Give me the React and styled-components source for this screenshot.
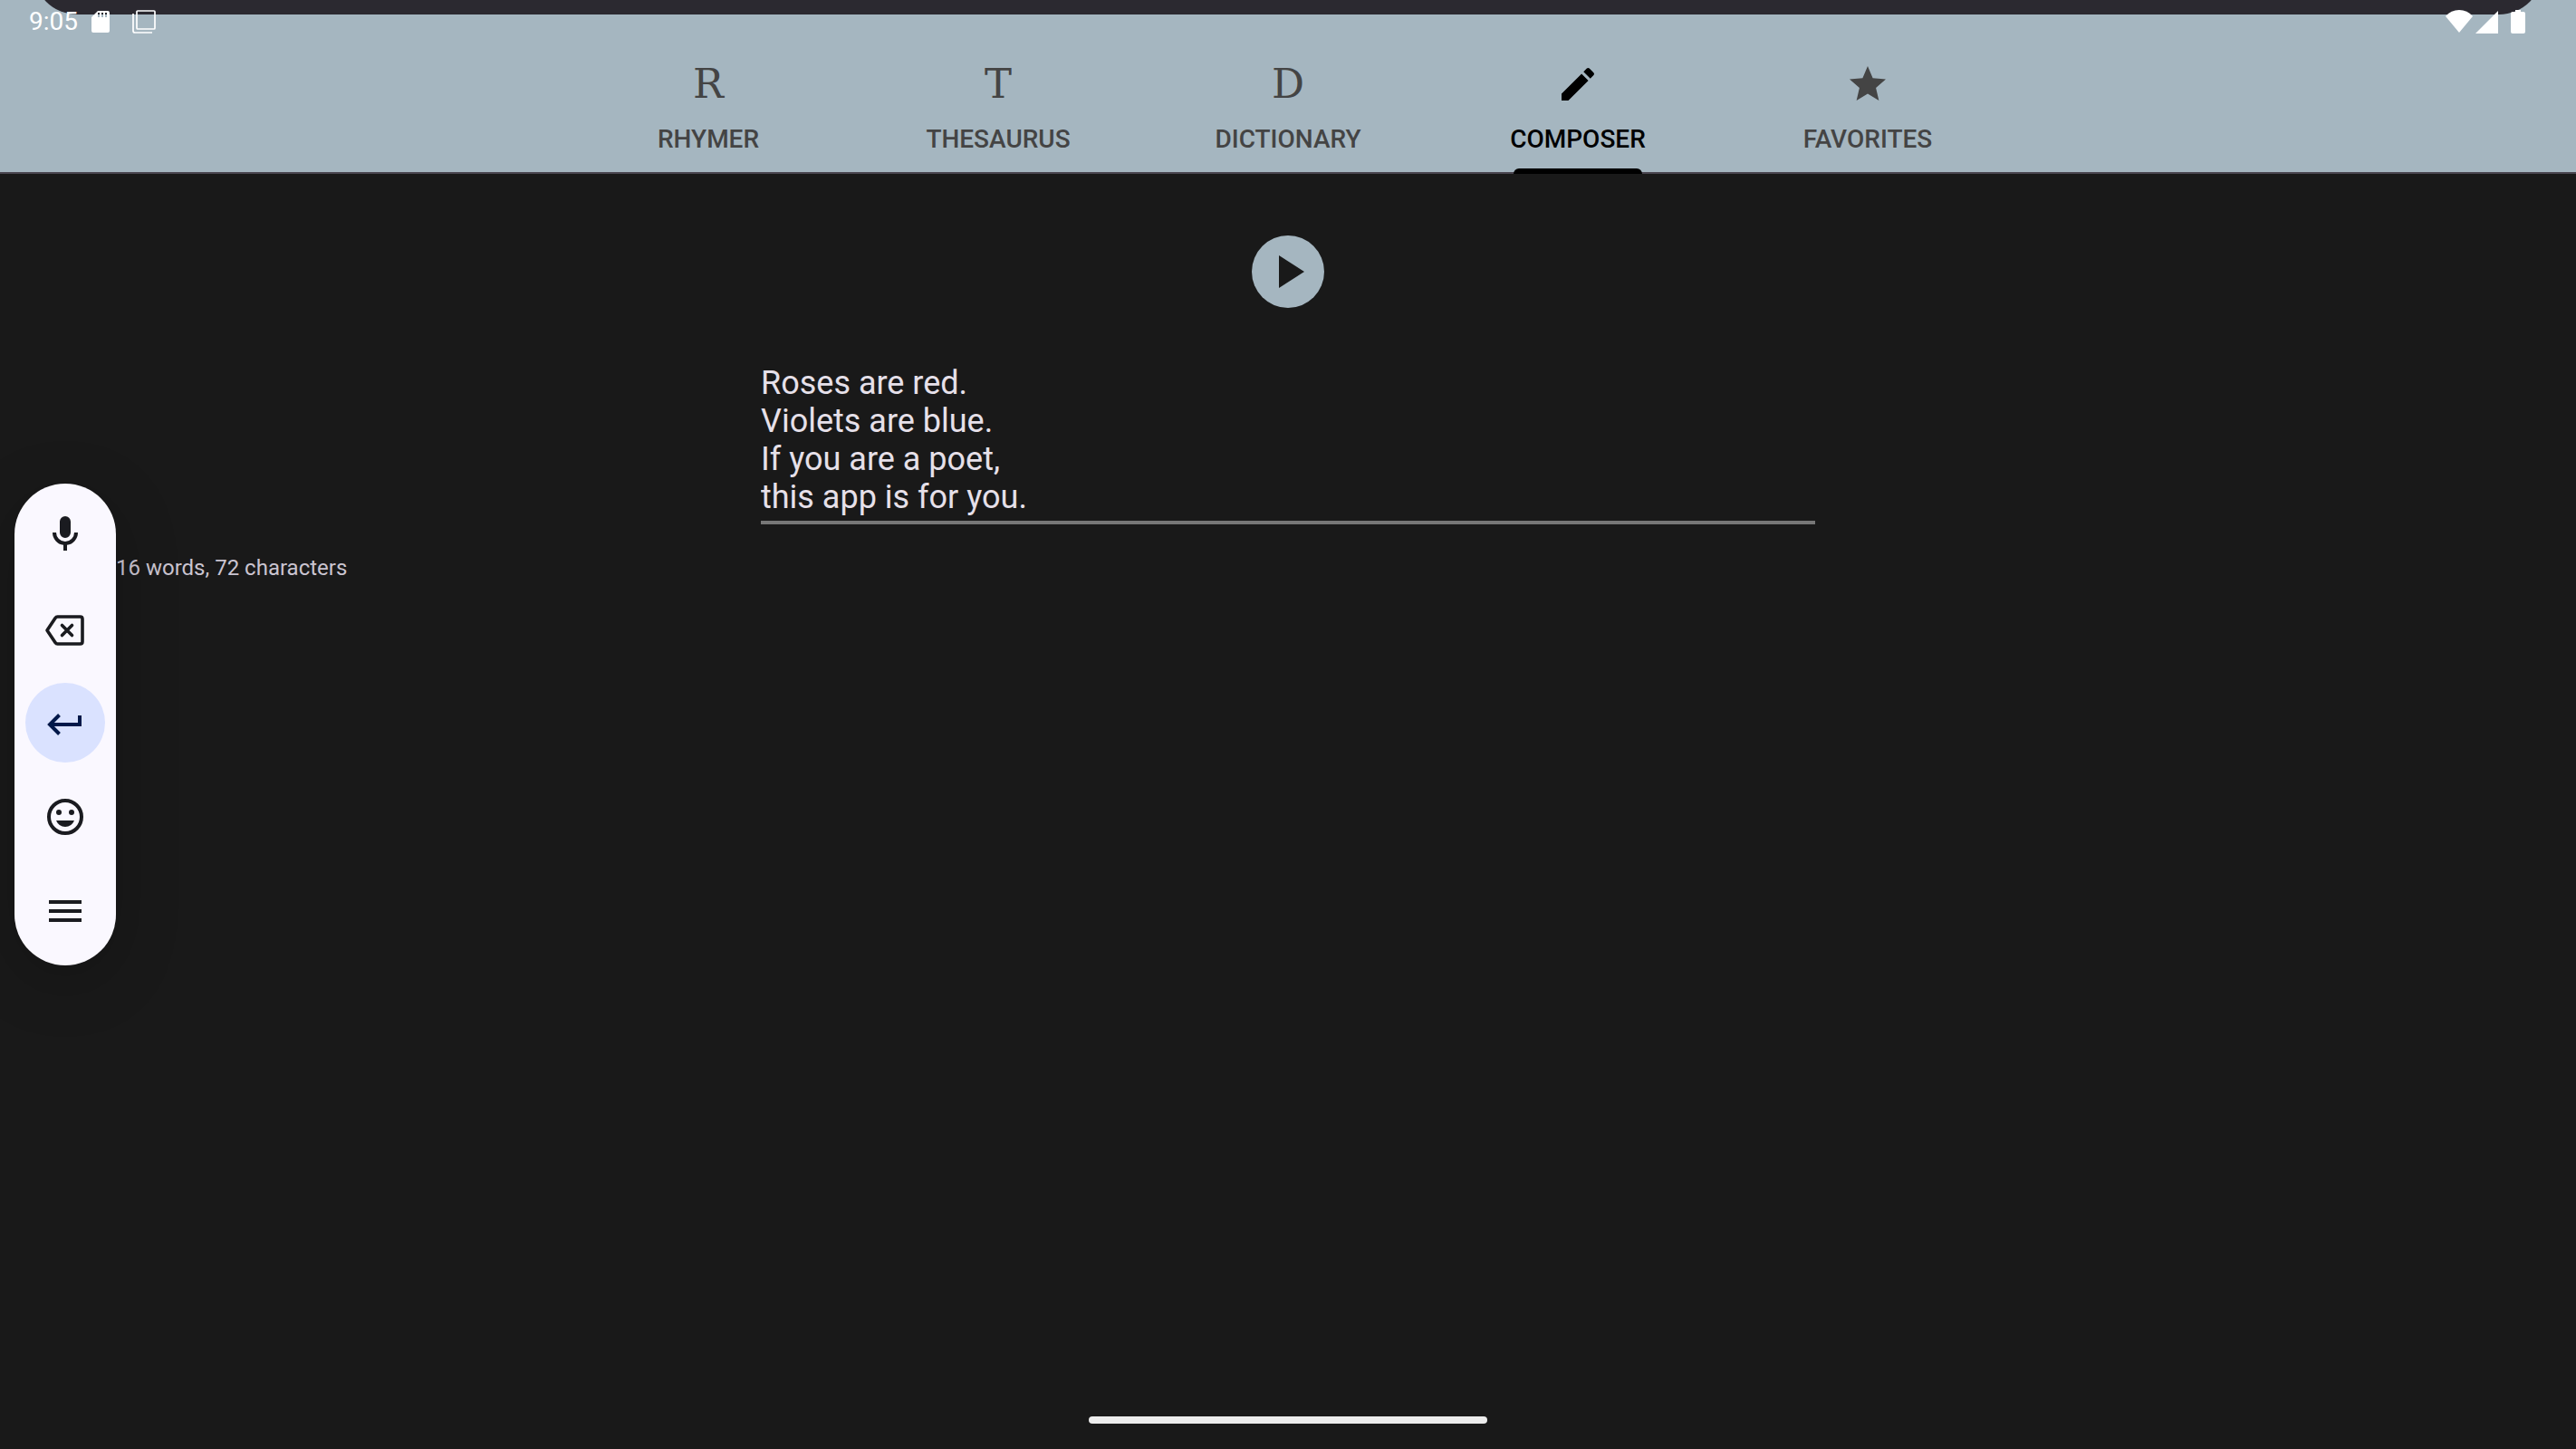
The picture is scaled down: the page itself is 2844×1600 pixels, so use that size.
import React, { useState } from "react";
import styled, { createGlobalStyle } from "styled-components";

const GlobalStyle = createGlobalStyle`
  *, *::before, *::after { box-sizing: border-box; }
  body {
    margin: 0;
    background: #191919;
    font-family: Roboto, "Noto Sans", sans-serif;
  }
  button {
    border: 0;
    padding: 0;
    background: none;
    font: inherit;
    color: inherit;
    cursor: pointer;
  }
`;

const Screen = styled.div`
  position: relative;
  display: flex;
  flex-direction: column;
  min-height: 100vh;
  background: #191919;
  overflow: hidden;
`;

const Header = styled.header`
  position: relative;
  display: flex;
  flex-direction: column;
  background: #a5b6c0;
  border-bottom: 2px solid #49454f;
`;

const Cutout = styled.div`
  position: absolute;
  top: -80px;
  left: 37px;
  right: 37px;
  height: 96px;
  border-radius: 48px;
  background: #2b2930;
`;

const StatusBar = styled.div`
  position: relative;
  display: flex;
  justify-content: space-between;
  height: 48px;
  padding: 0 56px 0 32px;
  color: #fff;
`;

const StatusGroup = styled.div`
  display: flex;
  align-items: center;
  height: 48px;
  gap: ${(p) => p.$gap}px;
`;

const Clock = styled.time`
  font-size: 28px;
  line-height: 32px;
`;

const Tabs = styled.nav`
  display: flex;
  justify-content: center;
`;

const Tab = styled.button`
  position: relative;
  display: flex;
  flex-direction: column;
  align-items: center;
  gap: 21px;
  width: 320px;
  height: 142px;
  padding-top: 21px;
  color: ${(p) => (p.$active ? "#000" : "#444")};
`;

const TabGlyph = styled.span`
  display: flex;
  align-items: center;
  justify-content: center;
  width: 48px;
  height: 48px;
  font-family: "DejaVu Serif", serif;
  font-size: 45px;
  line-height: 48px;
`;

const TabLabel = styled.span`
  font-size: 28px;
  font-weight: 500;
  line-height: 32px;
`;

const Indicator = styled.span`
  position: absolute;
  bottom: -2px;
  left: 50%;
  width: 142px;
  height: 6px;
  margin-left: -71px;
  border-radius: 6px 6px 0 0;
  background: #000;
`;

const Main = styled.main`
  display: flex;
  flex: 1;
  flex-direction: column;
  align-items: center;
  padding-top: 68px;
`;

const PlayButton = styled.button`
  display: flex;
  width: 80px;
  height: 80px;
  border-radius: 50%;
  background: #a5b6c0;
  color: #191919;
`;

const Poem = styled.textarea`
  display: block;
  width: min(1164px, 100%);
  margin: 62px 0 0;
  padding: 0 0 5px;
  border: 0;
  border-bottom: 4px solid #777;
  outline: 0;
  background: none;
  color: #e6e0e9;
  font-family: inherit;
  font-size: 36px;
  line-height: 42px;
  overflow: hidden;
  resize: none;
`;

const Count = styled.p`
  align-self: stretch;
  margin: 34px 0 0;
  padding-left: 128px;
  color: #cac4d0;
  font-size: 24px;
  line-height: 28px;
`;

const InputPill = styled.aside`
  position: absolute;
  top: 534px;
  left: 16px;
  display: flex;
  flex-direction: column;
  gap: 16px;
  padding: 12px 12px 16px;
  border-radius: 56px;
  background: #faf8ff;
  box-shadow: 0 16px 72px rgba(0, 0, 0, 0.2);
`;

const PillButton = styled.button`
  display: flex;
  align-items: center;
  justify-content: center;
  width: 88px;
  height: 88px;
  border-radius: 50%;
  background: ${(p) => (p.$primary ? "#dae2ff" : "transparent")};
  color: ${(p) => (p.$primary ? "#001849" : "#1a1b20")};
`;

const HomeBar = styled.div`
  align-self: center;
  width: 440px;
  height: 8px;
  margin-bottom: 28px;
  border-radius: 4px;
  background: #ececec;
`;

const Icon = ({ path, children, size = 48 }) => (
  <svg width={size} height={size} viewBox="0 0 24 24" fill="currentColor" aria-hidden="true">
    {path ? <path d={path} /> : children}
  </svg>
);

const PENCIL =
  "M3 17.25V21h3.75L17.81 9.94l-3.75-3.75L3 17.25zM20.71 7.04a1 1 0 0 0 0-1.41l-2.34-2.34a1 1 0 0 0-1.41 0l-1.83 1.83 3.75 3.75 1.83-1.83z";
const STAR =
  "M12 17.27 18.18 21l-1.64-7.03L22 9.24l-7.19-.61L12 2 9.19 8.63 2 9.24l5.46 4.73L5.82 21z";

const TABS = [
  { name: "Rhymer", glyph: "R" },
  { name: "Thesaurus", glyph: "T" },
  { name: "Dictionary", glyph: "D" },
  { name: "Composer", glyph: <Icon path={PENCIL} /> },
  { name: "Favorites", glyph: <Icon path={STAR} /> },
];

const POEM = "Roses are red.\nViolets are blue.\nIf you are a poet,\nthis app is for you.";

const SdCard = () => (
  <svg width="20" height="26" viewBox="0 0 20 26" aria-hidden="true">
    <path
      fill="currentColor"
      fillRule="evenodd"
      d="M7 1h11q2 0 2 2v20q0 2-2 2H2q-2 0-2-2V8zM7 3v5h2V3zm4 0v5h2V3zm4 0v5h2V3z"
    />
  </svg>
);

const Windows = () => (
  <svg width="26" height="26" viewBox="0 0 26 26" fill="none" stroke="currentColor" strokeWidth="1.7" aria-hidden="true">
    <rect x="5" y="1" width="20" height="20" rx="1" />
    <path d="M1 4v19q0 2 2 2h19" />
  </svg>
);

const Wifi = () => (
  <svg width="30" height="26" viewBox="0 0 30 26" fill="currentColor" aria-hidden="true">
    <path d="M0 7Q6 0 15 0t15 7L15 25z" />
  </svg>
);

const Signal = () => (
  <svg width="25" height="26" viewBox="0 0 25 26" fill="currentColor" aria-hidden="true">
    <path d="M25 1v25H0z" />
  </svg>
);

const Battery = () => (
  <svg width="16" height="26" viewBox="0 0 16 26" fill="currentColor" aria-hidden="true">
    <path d="M5 0h6v2h3q2 0 2 2v20q0 2-2 2H2q-2 0-2-2V4q0-2 2-2h3z" />
  </svg>
);

export default function App() {
  const [active, setActive] = useState("Composer");
  const [text, setText] = useState(POEM);
  const words = text.split(/\s+/).filter(Boolean).length;

  return (
    <Screen>
      <GlobalStyle />
      <Header>
        <Cutout />
        <StatusBar>
          <StatusGroup $gap={15}>
            <Clock>9:05</Clock>
            <StatusGroup $gap={25}>
              <SdCard />
              <Windows />
            </StatusGroup>
          </StatusGroup>
          <StatusGroup $gap={14}>
            <StatusGroup $gap={3}>
              <Wifi />
              <Signal />
            </StatusGroup>
            <Battery />
          </StatusGroup>
        </StatusBar>
        <Tabs>
          {TABS.map(({ name, glyph }) => (
            <Tab key={name} type="button" $active={name === active} onClick={() => setActive(name)}>
              <TabGlyph>{glyph}</TabGlyph>
              <TabLabel>{name.toUpperCase()}</TabLabel>
              {name === active && <Indicator />}
            </Tab>
          ))}
        </Tabs>
      </Header>

      <Main>
        <PlayButton type="button" aria-label="Play">
          <svg width="80" height="80" viewBox="0 0 80 80" fill="currentColor" aria-hidden="true">
            <path d="M30 22v36l28-18z" />
          </svg>
        </PlayButton>
        <Poem
          aria-label="Poem"
          rows={4}
          spellCheck={false}
          value={text}
          onChange={(e) => setText(e.target.value)}
        />
        <Count>
          {words} words, {text.length} characters
        </Count>
      </Main>

      <InputPill>
        <PillButton type="button" aria-label="Voice input">
          <Icon path="M12 14a3 3 0 0 0 3-3V5a3 3 0 0 0-6 0v6a3 3 0 0 0 3 3zm5-3a5 5 0 0 1-10 0H5a7 7 0 0 0 6 6.92V21h2v-3.08A7 7 0 0 0 19 11z" />
        </PillButton>
        <PillButton type="button" aria-label="Backspace">
          <svg width="48" height="48" viewBox="0 0 48 48" fill="none" stroke="currentColor" strokeWidth="3.6" aria-hidden="true">
            <path strokeLinejoin="round" d="M15.5 11h25q2.5 0 2.5 2.5v25q0 2.5-2.5 2.5h-25q-1.5 0-2.5-1.5L4 26l9-13.5q1-1.5 2.5-1.5z" />
            <path strokeLinecap="round" d="m20.5 20.5 11 11m0-11-11 11" />
          </svg>
        </PillButton>
        <PillButton type="button" aria-label="Enter" $primary>
          <svg width="48" height="48" viewBox="0 0 48 48" fill="none" stroke="currentColor" strokeWidth="4" aria-hidden="true">
            <path d="M40 16v10H7" />
            <path d="M17.5 15.5 7 26l10.5 10.5" />
          </svg>
        </PillButton>
        <PillButton type="button" aria-label="Emoji">
          <Icon>
            <circle cx="12" cy="12" r="9" fill="none" stroke="currentColor" strokeWidth="2" />
            <circle cx="8.5" cy="9.5" r="1.5" />
            <circle cx="15.5" cy="9.5" r="1.5" />
            <path d="M7 14h10q-1.5 3.5-5 3.5T7 14z" />
          </Icon>
        </PillButton>
        <PillButton type="button" aria-label="Menu">
          <Icon path="M3 6h18v2H3zm0 5h18v2H3zm0 5h18v2H3z" />
        </PillButton>
      </InputPill>

      <HomeBar />
    </Screen>
  );
}
